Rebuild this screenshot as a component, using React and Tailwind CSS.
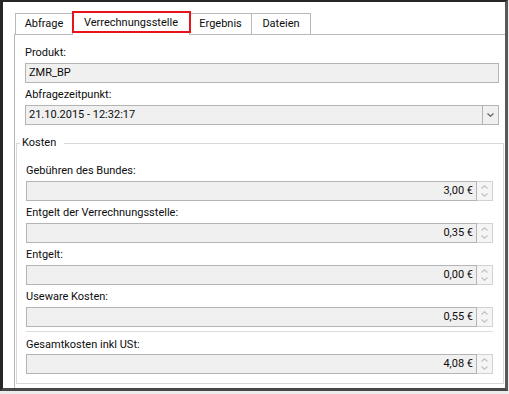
import React from 'react';

const costs = [
  { label: 'Gebühren des Bundes:', value: '3,00 €' },
  { label: 'Entgelt der Verrechnungsstelle:', value: '0,35 €' },
  { label: 'Entgelt:', value: '0,00 €' },
  { label: 'Useware Kosten:', value: '0,55 €' },
];

function Label({ children, className = '' }) {
  return <div className={`h-[14px] leading-[14px] ${className}`}>{children}</div>;
}

function Chevron({ up = false, className = '' }) {
  return (
    <svg width="7" height="4" viewBox="0 0 7 4" className={className}>
      <path
        d={up ? 'M0.5 3.5 L3.5 0.8 L6.5 3.5' : 'M0.5 0.5 L3.5 3.2 L6.5 0.5'}
        fill="none"
        stroke="currentColor"
        strokeWidth="1.3"
      />
    </svg>
  );
}

function MoneyField({ value }) {
  return (
    <div className="flex h-[20px]">
      <div className="flex-1 flex items-center justify-end pr-[3px] border border-[#b4b4b4] bg-[#f0f0f0]">
        {value}
      </div>
      <div className="w-[16px] flex flex-col items-center justify-center gap-[4px] border border-l-0 border-[#d2d2d2] bg-[#f5f5f5] text-[#c4c4c4]">
        <Chevron up />
        <Chevron />
      </div>
    </div>
  );
}

function Tab({ children, selected, className = '' }) {
  if (selected) {
    return (
      <div className={`relative z-10 -ml-px -mb-px h-[24px] flex items-center justify-center bg-white border-l border-t border-r border-[#b9b9b9] ${className}`}>
        {children}
        <span className="absolute -left-[1px] -top-px w-[119px] h-[22px] border-2 border-[#e8141c]" />
      </div>
    );
  }
  return (
    <div className={`h-[21px] flex items-center justify-center bg-white border-l border-t border-r border-[#b9b9b9] ${className}`}>
      {children}
    </div>
  );
}

export default function App() {
  return (
    <div className="w-[509px] h-[394px] bg-[#ececec] font-[Roboto,'Liberation_Sans',sans-serif] text-[11px] text-[#0d0d0d]">
      <div className="w-[508px] h-[391px] flex flex-col bg-white pl-[11px] border-l-[3px] border-t-[2px] border-r-[3px] border-b-[3px] border-l-[#262626] border-t-[#262626] border-r-[#595959] border-b-[#474747]">
        {/* tabs */}
        <div className="flex items-end pt-[9px] pl-[1px]">
          <Tab className="w-[58px]">Abfrage</Tab>
          <Tab selected className="w-[118px]">Verrechnungsstelle</Tab>
          <Tab className="w-[63px] -ml-px">Ergebnis</Tab>
          <Tab className="w-[60px] -ml-px">Dateien</Tab>
        </div>

        {/* panel */}
        <div className="flex-1 flex flex-col border-l border-t border-[#b9b9b9] pt-[11px] px-[1px]">
          <div className="ml-[9px] mr-[5px] flex flex-col">
            <Label>Produkt:</Label>
            <div className="mt-[3px] h-[20px] flex items-center pl-[3px] border border-[#b4b4b4] bg-[#f0f0f0]">
              ZMR_BP
            </div>
            <Label className="mt-[5px]">Abfragezeitpunkt:</Label>
            <div className="mt-[3px] h-[20px] flex border border-[#b4b4b4] bg-[#f0f0f0]">
              <div className="flex-1 flex items-center pl-[3px]">21.10.2015 - 12:32:17</div>
              <div className="w-[16px] flex items-center justify-center border-l border-[#b4b4b4] text-[#6a6a6a]">
                <Chevron />
              </div>
            </div>
          </div>

          <fieldset className="mt-[11px] border border-[#d8d8d8]">
            <legend className="ml-[3px] pl-[2px] pr-[8px] leading-[14px]">Kosten</legend>
            <div className="pl-[9px] pr-[10px] pt-[14px] pb-[9px] flex flex-col">
              {costs.map((c, i) => (
                <div key={c.label} className={i > 0 ? 'mt-[5px]' : ''}>
                  <Label>{c.label}</Label>
                  <div className="mt-[3px]">
                    <MoneyField value={c.value} />
                  </div>
                </div>
              ))}
              <div className="mt-[4px] h-px bg-[#dcdcdc]" />
              <Label className="mt-[6px]">Gesamtkosten inkl USt:</Label>
              <div className="mt-[2px]">
                <MoneyField value="4,08 €" />
              </div>
            </div>
          </fieldset>
        </div>
      </div>
    </div>
  );
}
